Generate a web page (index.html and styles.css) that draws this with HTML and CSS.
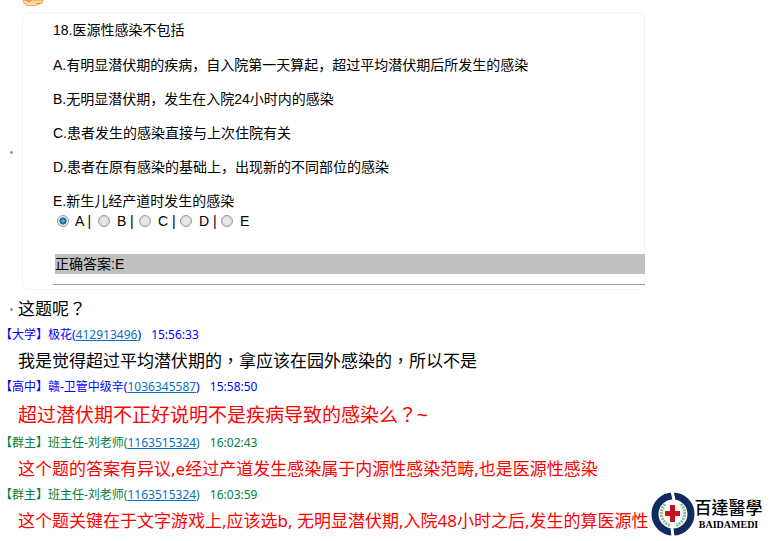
FILE: index.html
```
<!DOCTYPE html>
<html lang="zh-CN">
<head>
  <meta charset="UTF-8">
  <title>群聊记录</title>
  <meta name="viewport" content="width=device-width, initial-scale=1.0">
  <link rel="stylesheet" href="styles.css">
</head>
<body>

  <main class="chat">
    <svg class="sticker" viewBox="0 0 22 6">
      <path d="M1 0C1 4 5 6 10 6c3 0 5-1 7-2l3-1 1-3z" fill="#ffd9a0" stroke="#f39a45"/>
      <path d="M4 0l3 2 2-2M15 4l3-1" fill="none" stroke="#d9781e"/>
    </svg>

    <!-- Soal -->
    <div class="shared">
      <span class="dot"></span>
      <section class="card">
        <p>18.医源性感染不包括</p>
        <p>A.有明显潜伏期的疾病，自入院第一天算起，超过平均潜伏期后所发生的感染</p>
        <p>B.无明显潜伏期，发生在入院24小时内的感染</p>
        <p>C.患者发生的感染直接与上次住院有关</p>
        <p>D.患者在原有感染的基础上，出现新的不同部位的感染</p>
        <p>E.新生儿经产道时发生的感染</p>
        <form class="choices">
          <label><input type="radio" name="answer" value="A" checked> A |</label>
          <label><input type="radio" name="answer" value="B"> B |</label>
          <label><input type="radio" name="answer" value="C"> C |</label>
          <label><input type="radio" name="answer" value="D"> D |</label>
          <label><input type="radio" name="answer" value="E"> E</label>
        </form>
        <div class="result">正确答案:E</div>
        <hr>
      </section>
    </div>

    <div class="shared">
      <span class="dot"></span>
      <p class="text">这题呢<span class="mark" lang="zh-TW">？</span></p>
    </div>

    <article class="message">
      <header>【大学】极花(<a href="#">412913496</a>) <time>15:56:33</time></header>
      <p class="text">我是觉得超过平均潜伏期的<span class="mark" lang="zh-TW">，</span>拿应该在园外感染的<span class="mark" lang="zh-TW">，</span>所以不是</p>
    </article>

    <article class="message">
      <header>【高中】赣-卫管中级辛(<a href="#">1036345587</a>) <time>15:58:50</time></header>
      <p class="text red big">超过潜伏期不正好说明不是疾病导致的感染么<span class="mark" lang="zh-TW">？</span>~</p>
    </article>

    <article class="message owner">
      <header>【群主】班主任-刘老师(<a href="#">1163515324</a>) <time>16:02:43</time></header>
      <p class="text red">这个题的答案有异议,e经过产道发生感染属于内源性感染范畴,也是医源性感染</p>
    </article>

    <div class="last">
      <article class="message owner">
        <header>【群主】班主任-刘老师(<a href="#">1163515324</a>) <time>16:03:59</time></header>
        <p class="text red">这个题关键在于文字游戏上,应该选b, 无明显潜伏期,入院48小时之后,发生的算医源性</p>
      </article>
      <div class="brand">
        <svg class="emblem" viewBox="0 0 44 46">
          <circle cx="22" cy="23" r="18" fill="none" stroke="#10295f" stroke-width="7"/>
          <path d="M21 0l2 9M21 37l1 9" stroke="#fff" stroke-width="3"/>
          <path d="M14 13C8 20 9 31 20 35M30 13c6 7 5 18-6 22" fill="none" stroke="#8cb98f" stroke-width="3" stroke-dasharray="2 1"/>
          <path d="M19 14h5v6h5v5h-5v6h-5v-6h-5v-5h5z" fill="#c4121f"/>
        </svg>
        <div class="brand-name">
          <span class="brand-cn" lang="zh-TW">百達醫學</span>
          <span class="brand-en">BAIDAMEDI</span>
        </div>
      </div>
    </div>
  </main>

</body>
</html>
```
FILE: styles.css
```
* { margin: 0; padding: 0; box-sizing: border-box; }
body {
  background: #fff;
  color: #000;
  font-family: "Noto Sans", "Noto Sans CJK SC", sans-serif;
}

.sticker { display: block; width: 22px; height: 6px; margin: 0 0 6px 22px; }

/* SOAL */
.shared { display: flex; align-items: center; }
.dot { flex: none; width: 3px; height: 3px; margin: 0 5px 0 10px; border-radius: 50%; background: #999; }
.card {
  flex: 1;
  max-width: 623px;
  margin: 0 4px 3px;
  padding: 7px 0 4px 30px;
  border: 1px solid #f2f2f2;
  border-radius: 7px;
  font-family: "Liberation Sans", "Noto Sans CJK SC", sans-serif;
  font-size: 14px;
  line-height: 20px;
}
.card p { margin-bottom: 14px; }
.card p:first-child { margin-bottom: 15px; }
.card p:nth-of-type(6) { margin-bottom: 0; }
.choices { display: flex; padding-left: 4px; }
.choices label { display: flex; align-items: center; width: 41px; white-space: pre; }
.choices input {
  appearance: none;
  flex: none;
  width: 12px;
  height: 12px;
  margin-right: 3px;
  border: 1px solid #999;
  border-radius: 50%;
  background: radial-gradient(#e8e8e8 35%, #ccc);
}
.choices input:checked { background: radial-gradient(#48b8e8 10%, #12507c 45%, #e8e8e8 55%); }
.result { margin: 23px -1px 10px 2px; background: #c0c0c0; }
hr { margin-right: -1px; border: 0; border-top: 1px solid #999; }

/* PESAN */
.message header { color: #00f; font-size: 12px; line-height: 20px; }
.message a { color: #0b6fc0; }
.message time { margin-left: 7px; }
.owner header { color: #008040; }
.text { padding-left: 18px; font-size: 17px; line-height: 32px; white-space: nowrap; }
.shared .text { padding-left: 0; }
.mark { font-family: "Noto Sans CJK TC", sans-serif; line-height: 1; }
.red { color: #f00; }
.big { font-size: 19px; line-height: 36px; }

/* LOGO */
.last { display: flex; align-items: flex-end; }
.brand { display: flex; align-items: center; margin-left: 2px; }
.emblem { width: 44px; height: 46px; }
.brand-name { display: flex; flex-direction: column; align-items: center; }
.brand-cn { font-family: "Noto Sans CJK TC", sans-serif; font-size: 17px; line-height: 22px; font-weight: 500; }
.brand-en { font-family: "Liberation Serif", serif; font-size: 10px; line-height: 14px; font-weight: bold; }
```
